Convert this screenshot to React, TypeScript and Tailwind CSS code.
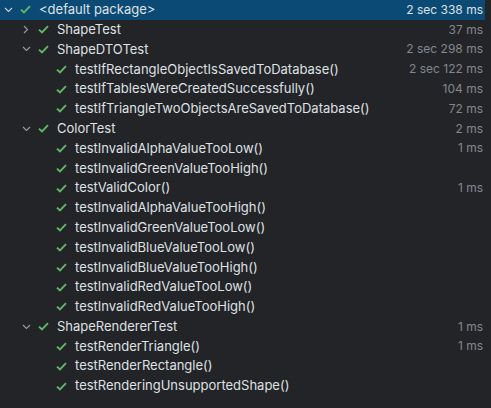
import React from 'react'

type Node = {
  name: string
  time?: string
  level: 0 | 1 | 2
  chevron?: 'open' | 'closed'
  selected?: boolean
}

const rows: Node[] = [
  { name: '<default package>', time: '2 sec 338 ms', level: 0, chevron: 'open', selected: true },
  { name: 'ShapeTest', time: '37 ms', level: 1, chevron: 'closed' },
  { name: 'ShapeDTOTest', time: '2 sec 298 ms', level: 1, chevron: 'open' },
  { name: 'testIfRectangleObjectIsSavedToDatabase()', time: '2 sec 122 ms', level: 2 },
  { name: 'testIfTablesWereCreatedSuccessfully()', time: '104 ms', level: 2 },
  { name: 'testIfTriangleTwoObjectsAreSavedToDatabase()', time: '72 ms', level: 2 },
  { name: 'ColorTest', time: '2 ms', level: 1, chevron: 'open' },
  { name: 'testInvalidAlphaValueTooLow()', time: '1 ms', level: 2 },
  { name: 'testInvalidGreenValueTooHigh()', level: 2 },
  { name: 'testValidColor()', time: '1 ms', level: 2 },
  { name: 'testInvalidAlphaValueTooHigh()', level: 2 },
  { name: 'testInvalidGreenValueTooLow()', level: 2 },
  { name: 'testInvalidBlueValueTooLow()', level: 2 },
  { name: 'testInvalidBlueValueTooHigh()', level: 2 },
  { name: 'testInvalidRedValueTooLow()', level: 2 },
  { name: 'testInvalidRedValueTooHigh()', level: 2 },
  { name: 'ShapeRendererTest', time: '1 ms', level: 1, chevron: 'open' },
  { name: 'testRenderTriangle()', time: '1 ms', level: 2 },
  { name: 'testRenderRectangle()', level: 2 },
  { name: 'testRenderingUnsupportedShape()', level: 2 },
]

const INDENT: Record<number, string> = {
  0: 'pl-0',
  1: 'pl-[18px]',
  2: 'pl-[36px]',
}

function Chevron({ open, light }: { open: boolean; light?: boolean }) {
  const stroke = light ? '#cfd2d8' : '#9a9da3'
  return open ? (
    <svg width="9" height="6" viewBox="0 0 9 6" fill="none">
      <path d="M1 1L4.5 4.5L8 1" stroke={stroke} strokeWidth="1.1" />
    </svg>
  ) : (
    <svg width="6" height="9" viewBox="0 0 6 9" fill="none">
      <path d="M1 1L4.5 4.5L1 8" stroke={stroke} strokeWidth="1.1" />
    </svg>
  )
}

function Check() {
  return (
    <svg width="11" height="9" viewBox="0 0 11 9" fill="none">
      <path d="M1 4.6L4 7.5L10 1.2" stroke="#5fb865" strokeWidth="1.9" />
    </svg>
  )
}

export default function App() {
  return (
    <div className="w-[491px] h-[408px] bg-[#232427] overflow-hidden font-['Inter','Noto_Sans',sans-serif] text-[13px] text-[#dfe1e5]">
      {rows.map((r, i) => (
        <div
          key={i}
          className={`w-[485px] h-[19.8px] flex items-center ${INDENT[r.level]} ${r.selected ? 'bg-[#0b4a74]' : ''}`}
        >
          <span className="w-4 shrink-0 flex justify-center">
            {r.chevron && <Chevron open={r.chevron === 'open'} light={r.selected} />}
          </span>
          <span className="w-[19px] shrink-0 flex justify-center">
            <Check />
          </span>
          <span className="ml-1 whitespace-nowrap">{r.name}</span>
          {r.time && (
            <span
              className={`ml-auto pr-[2px] whitespace-nowrap text-[12px] ${r.selected ? 'text-[#dfe1e5]' : 'text-[#83878d]'}`}
            >
              {r.time}
            </span>
          )}
        </div>
      ))}
    </div>
  )
}
